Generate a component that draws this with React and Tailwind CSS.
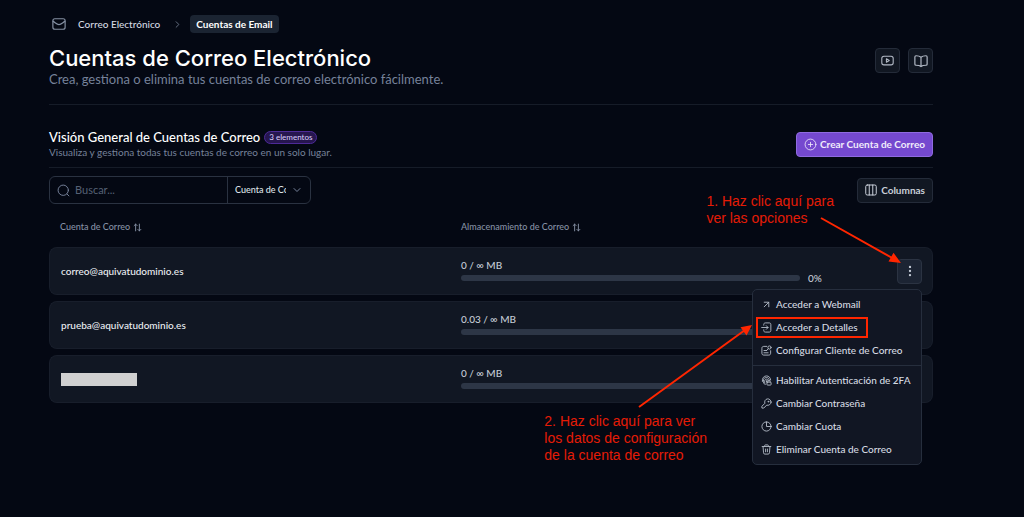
import React, { useState } from 'react';
import { ArrowUpRight, ChevronDown, ChevronRight, CirclePlus, EllipsisVertical } from 'lucide-react';

const Icon = ({ className, strokeWidth = 1.5, children }) => (
  <svg
    viewBox="0 0 24 24"
    fill="none"
    stroke="currentColor"
    strokeWidth={strokeWidth}
    strokeLinecap="round"
    strokeLinejoin="round"
    className={className}
    aria-hidden="true"
  >
    {children}
  </svg>
);

const MailIcon = (props) => (
  <Icon {...props}>
    <rect x="1.5" y="3" width="21" height="18" rx="3.5" />
    <path d="M2 7.500c3.500 2 6.500 5.500 10 5.500s6.500-3.500 10-5.500" />
  </Icon>
);

const VideoIcon = (props) => (
  <Icon {...props}>
    <rect x="1.500" y="4" width="21" height="16" rx="4" />
    <path d="M10 8.800v6.400l5.200-3.200z" />
  </Icon>
);

const BookIcon = (props) => (
  <Icon {...props}>
    <path d="M12 5.500C10 3.800 7 3 3.500 3 2.400 3 1.500 3.800 1.500 5v12.500c0 1.100.9 1.800 2 1.800 3.500 0 6.500.6 8.500 2.200 2-1.600 5-2.200 8.500-2.200 1.100 0 2-.7 2-1.800V5c0-1.200-.9-2-2-2C17 3 14 3.800 12 5.500zM12 5.500v16" />
  </Icon>
);

const SearchIcon = (props) => (
  <Icon {...props}>
    <circle cx="11.500" cy="11.500" r="9.500" />
    <path d="M18.500 18.500 22 22" />
  </Icon>
);

const ColumnsIcon = (props) => (
  <Icon {...props}>
    <rect x="1.500" y="2" width="21" height="20" rx="3" />
    <path d="M8.500 2v20M15.500 2v20" />
  </Icon>
);

const SortIcon = (props) => (
  <Icon {...props}>
    <path d="M7 21V3M3 7l4-4 4 4M17 3v18M13 17l4 4 4-4" />
  </Icon>
);

const EnterIcon = (props) => (
  <Icon {...props}>
    <path d="M6 7V5.500C6 3.300 7.300 2 9.500 2H18c2.200 0 3.500 1.300 3.500 3.500v13c0 2.200-1.300 3.500-3.500 3.500H9.500C7.300 22 6 20.700 6 18.500V17M1.500 12H15M11.500 8l4 4-4 4" />
  </Icon>
);

const ConfigIcon = (props) => (
  <Icon {...props}>
    <path d="M12.500 3H6C3.500 3 2 4.500 2 7v11c0 2.500 1.500 4 4 4h11c2.500 0 4-1.500 4-4v-5.500M6.500 12h6M6.500 17h9" />
    <circle cx="18.500" cy="5.500" r="3.500" />
    <path d="M16 8l-4 4" />
  </Icon>
);

const FingerprintIcon = (props) => (
  <Icon {...props}>
    <path d="M3 14c-1-7 3-12 9-12 5 0 9 4 9 9M6 18c-1-3-1-5-.5-8C6.300 7 9 5.500 12 5.500c3.500 0 6 2.500 6 6M9 21c-1.500-4-1.300-7-.5-9.500C9.300 9.500 11 9 12 9c2 0 3 1.500 3 3M12 12.500v3" />
    <rect x="13" y="15.500" width="9" height="6.500" rx="1.500" />
    <path d="M15 15.500v-1a2.500 2.500 0 0 1 5 0v1" />
  </Icon>
);

const KeyIcon = (props) => (
  <Icon {...props}>
    <path d="M22 9a7 7 0 0 1-9.500 6.500L6 22H2v-4l6.500-6.500A7 7 0 1 1 22 9z" />
    <circle cx="16" cy="8" r="1" />
  </Icon>
);

const QuotaIcon = (props) => (
  <Icon {...props}>
    <circle cx="12" cy="12" r="10" />
    <path d="M12 2v10h10" />
  </Icon>
);

const TrashIcon = (props) => (
  <Icon {...props}>
    <path d="M2.500 5.500h19M8 5V3.500C8 2.500 8.500 2 9.500 2h5c1 0 1.500.5 1.500 1.500V5M4.500 6l1 13c.1 2 1 3 3 3h7c2 0 2.900-1 3-3l1-13M10 11v6M14 11v6" />
  </Icon>
);

const accounts = [
  { id: 1, email: 'correo@aquivatudominio.es', used: '0', percent: '0%' },
  { id: 2, email: 'prueba@aquivatudominio.es', used: '0.03', percent: null },
  { id: 3, email: null, used: '0', percent: null },
];

const menuGroups = [
  [
    { label: 'Acceder a Webmail', icon: ArrowUpRight },
    { label: 'Acceder a Detalles', icon: EnterIcon },
    { label: 'Configurar Cliente de Correo', icon: ConfigIcon },
  ],
  [
    { label: 'Habilitar Autenticación de 2FA', icon: FingerprintIcon },
    { label: 'Cambiar Contraseña', icon: KeyIcon },
    { label: 'Cambiar Cuota', icon: QuotaIcon },
    { label: 'Eliminar Cuenta de Correo', icon: TrashIcon },
  ],
];

const IconButton = ({ label, children, ...rest }) => (
  <button
    type="button"
    aria-label={label}
    className="flex size-[25px] items-center justify-center rounded border border-[#242b39] bg-[#111722] text-[#b4bbc7]"
    {...rest}
  >
    {children}
  </button>
);

const ActionsMenu = () => (
  <div
    role="menu"
    className="absolute top-full right-0 z-10 mt-[5px] w-[170px] rounded-[5px] border border-[#262e3d] bg-[#111623] py-[3px]"
  >
    {menuGroups.map((group, index) => (
      <div key={index} role="group" className={index > 0 ? 'mt-[3px] border-t border-[#262e3d] pt-[3px]' : ''}>
        {group.map(({ label, icon: ItemIcon }) => (
          <button
            key={label}
            type="button"
            role="menuitem"
            className="flex h-[23px] w-full items-center gap-1 px-2 text-[10px] font-medium whitespace-nowrap text-[#d5dae2]"
          >
            <ItemIcon className="size-[11px] shrink-0 text-[#b4bbc7]" strokeWidth={2} />
            {label}
          </button>
        ))}
      </div>
    ))}
  </div>
);

const SortHeader = ({ children }) => (
  <th scope="col" className="px-[11px] text-left font-medium">
    <button type="button" className="flex items-center gap-[3px] whitespace-nowrap">
      {children}
      <SortIcon className="size-[9px]" strokeWidth={2.5} />
    </button>
  </th>
);

const AccountRow = ({ account, menuOpen, onToggle }) => (
  <tr className="h-12">
    <td className="rounded-l-lg border-y border-l border-[#181e2b] bg-[#111723] px-[11px] text-[10px] font-medium text-[#eceff3]">
      {account.email || <div className="h-[13px] w-[76px] bg-[#d0d0d0]" />}
    </td>
    <td className="border-y border-[#181e2b] bg-[#111723] px-[11px] text-[10px] font-medium text-[#c5ccd6]">
      <div className="leading-[14px]">{account.used} / ∞ MB</div>
      <div className="flex h-3 items-center gap-2">
        <div className="h-[6px] flex-1 rounded-full bg-[#2d3646]" />
        <span className="w-[67px]">{account.percent}</span>
      </div>
    </td>
    <td className="rounded-r-lg border-y border-r border-[#181e2b] bg-[#111723] pr-[10px]">
      <div className="relative flex justify-end">
        <button
          type="button"
          aria-label="Opciones"
          aria-expanded={menuOpen}
          onClick={onToggle}
          className="flex size-[25px] items-center justify-center rounded border border-[#2b3342] bg-[#1c2433] text-[#c3cad5]"
        >
          <EllipsisVertical className="size-[14px]" />
        </button>
        {menuOpen && <ActionsMenu />}
      </div>
    </td>
  </tr>
);

// Red arrows and notes laid over the page
const GuideNotes = () => (
  <div className="pointer-events-none absolute inset-0 z-20 overflow-hidden font-['Liberation_Sans',sans-serif] text-[14px] leading-[17px] whitespace-nowrap text-[#e51c06]">
    <svg viewBox="0 0 1024 517" className="absolute top-0 right-0 h-[517px] w-[1024px]" fill="none" aria-hidden="true">
      <g stroke="#ff2600" strokeWidth="2">
        <path d="M821 218l73 41M639 407l106-77" />
        <rect x="757" y="318" width="110" height="19" />
      </g>
      <path d="M901 263l-12.500-1.500 5-8.700zM752 325l-5.500 10.500-6-8.200z" fill="#ff2600" />
    </svg>
    <p className="absolute top-[193px] right-[190px]">
      1. Haz clic aquí para
      <br />
      ver las opciones
    </p>
    <p className="absolute top-[413px] right-[317px]">
      2. Haz clic aquí para ver
      <br />
      los datos de configuración
      <br />
      de la cuenta de correo
    </p>
  </div>
);

const App = () => {
  const [search, setSearch] = useState('');
  const [openMenu, setOpenMenu] = useState(1);

  return (
    <main className="relative min-h-screen bg-[#040813] pt-[15px] pr-[91px] pl-[49px] font-['Lato',sans-serif] text-[10px] text-[#d5dae2]">
      <nav aria-label="Ruta" className="flex h-[18px] items-center pl-[3px] font-medium">
        <MailIcon className="mr-3 size-[14px] text-[#8590a3]" strokeWidth={2} />
        <a href="#correo">Correo Electrónico</a>
        <ChevronRight className="mr-[7px] ml-3 size-[11px] text-[#6b7588]" />
        <span aria-current="page" className="rounded bg-[#1b2432] px-[6px] leading-[18px] font-bold text-white">
          Cuentas de Email
        </span>
      </nav>

      <header className="mt-[13px] flex items-start justify-between border-b border-[#161c28] pb-4">
        <div>
          <h1 className="font-['Inter',sans-serif] text-[22px] leading-6 font-medium text-white">
            Cuentas de Correo Electrónico
          </h1>
          <p className="text-[13px] leading-[18px] text-[#76829a]">
            Crea, gestiona o elimina tus cuentas de correo electrónico fácilmente.
          </p>
        </div>
        <div className="flex gap-2 pt-0.5">
          <IconButton label="Vídeo">
            <VideoIcon className="size-[13px]" strokeWidth={2} />
          </IconButton>
          <IconButton label="Guía">
            <BookIcon className="size-[14px]" strokeWidth={2} />
          </IconButton>
        </div>
      </header>

      <section>
        <div className="flex items-center justify-between border-b border-[#161c28] pt-6 pb-2">
          <div>
            <div className="flex items-center gap-1">
              <h2 className="text-[13px] leading-4 font-medium text-white">Visión General de Cuentas de Correo</h2>
              <span className="rounded-full border border-[#4d2a98] bg-[#26164f] px-1 text-[8px] leading-[11px] font-medium text-[#d5c7f5]">
                3 elementos
              </span>
            </div>
            <p className="leading-[14px] text-[#76829a]">
              Visualiza y gestiona todas tus cuentas de correo en un solo lugar.
            </p>
          </div>
          <button
            type="button"
            className="flex h-[25px] items-center gap-[3px] rounded border border-[#8f6be0] bg-[#7549cf] px-[7px] font-bold text-[#f1ecfb]"
          >
            <CirclePlus className="size-[13px]" strokeWidth={1.5} />
            Crear Cuenta de Correo
          </button>
        </div>

        <div className="flex items-center justify-between pt-2">
          <div className="flex h-7 w-[262px] rounded-md border border-[#2a3241]">
            <label className="flex flex-1 items-center gap-[5px] pl-[7px]">
              <SearchIcon className="size-[13px] shrink-0 text-[#76829a]" strokeWidth={1.8} />
              <input
                type="text"
                aria-label="Buscar"
                value={search}
                onChange={(e) => setSearch(e.target.value)}
                placeholder="Buscar..."
                className="w-full min-w-0 text-[11px] outline-none placeholder:text-[#566175]"
              />
            </label>
            <div className="relative w-[83px] border-l border-[#2a3241]">
              <select
                aria-label="Buscar por"
                className="h-full w-full appearance-none pr-6 pl-[7px] text-[9px] font-medium text-[#dfe3e9] outline-none"
              >
                <option>Cuenta de Correo</option>
              </select>
              <ChevronDown className="pointer-events-none absolute top-[7px] right-[7px] size-3 text-[#76829a]" />
            </div>
          </div>
          <button
            type="button"
            className="flex h-[25px] items-center gap-1 rounded border border-[#242b39] bg-[#111722] px-[7px] font-bold text-[#c9cfd9]"
          >
            <ColumnsIcon className="size-[12px]" strokeWidth={2} />
            Columnas
          </button>
        </div>

        <table className="mt-[3px] w-full table-fixed border-separate border-spacing-x-0 border-spacing-y-[6px]">
          <colgroup>
            <col className="w-[401px]" />
            <col />
            <col className="w-[47px]" />
          </colgroup>
          <thead>
            <tr className="h-7 text-[9px] text-[#8691a5]">
              <SortHeader>Cuenta de Correo</SortHeader>
              <SortHeader>Almacenamiento de Correo</SortHeader>
              <td />
            </tr>
          </thead>
          <tbody>
            {accounts.map((account) => (
              <AccountRow
                key={account.id}
                account={account}
                menuOpen={openMenu === account.id}
                onToggle={() => setOpenMenu(openMenu === account.id ? null : account.id)}
              />
            ))}
          </tbody>
        </table>
      </section>

      <GuideNotes />
    </main>
  );
};

export default App;
